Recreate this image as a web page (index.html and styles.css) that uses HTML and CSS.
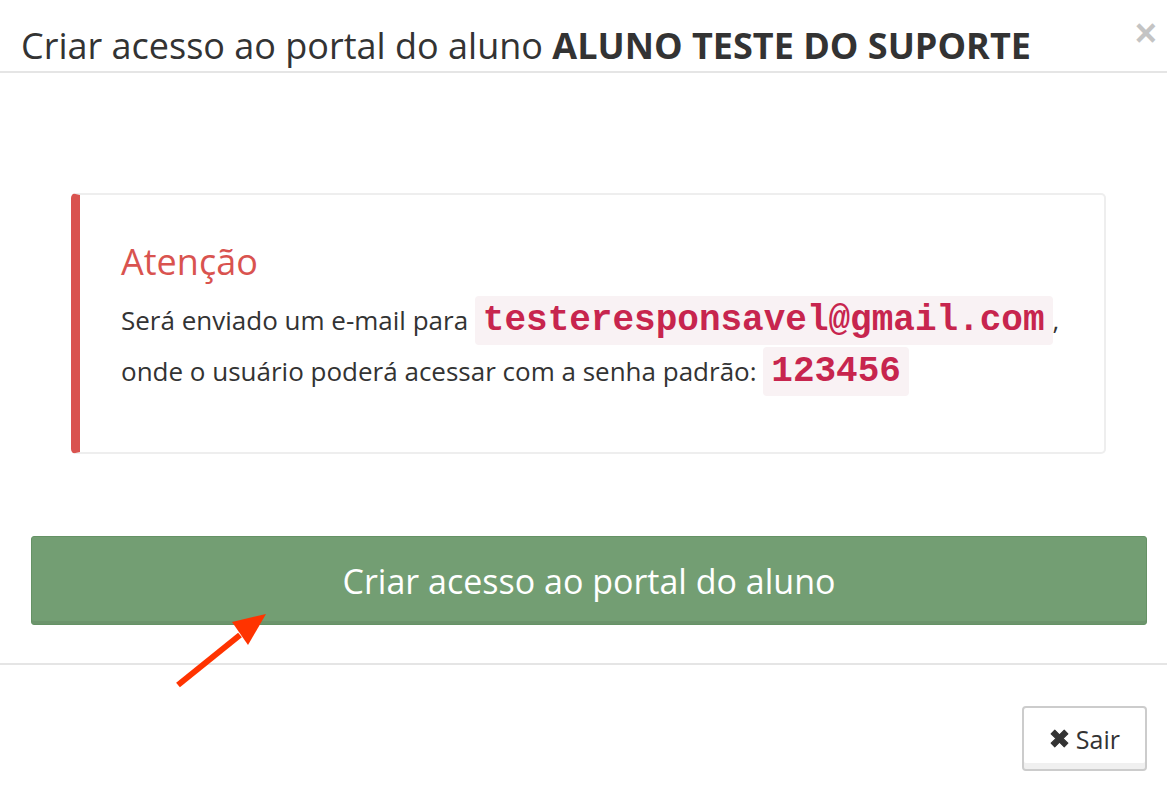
FILE: index.html
```html
<!DOCTYPE html>
<html lang="pt-BR">
<head>
    <meta charset="UTF-8">
    <title>Criar acesso ao portal do aluno</title>
    <link rel="stylesheet" href="styles.css">
</head>
<body>
    <div class="modal">
        <div class="modal-header">
            <h4 class="modal-title">Criar acesso ao portal do aluno <strong>ALUNO TESTE DO SUPORTE</strong></h4>
            <button type="button" class="close">&times;</button>
        </div>

        <div class="modal-body">
            <div class="alert">
                <h4 class="alert-title">Atenção</h4>
                <p>Será enviado um e-mail para <code>testeresponsavel@gmail.com</code>,</p>
                <p>onde o usuário poderá acessar com a senha padrão: <code>123456</code></p>
            </div>

            <button type="button" class="btn-success">Criar acesso ao portal do aluno</button>
        </div>

        <div class="modal-footer">
            <button type="button" class="btn-default">
                <svg class="icon" viewBox="0 0 16 16" width="21" height="21">
                    <path d="M1.6 4.4 4.4 1.6 8 5.2 11.6 1.6 14.4 4.4 10.8 8 14.4 11.6 11.6 14.4 8 10.8 4.4 14.4 1.6 11.6 5.2 8Z" fill="#333" stroke="#333" stroke-width="0.8" stroke-linejoin="round"/>
                </svg>
                Sair
            </button>
        </div>

        <!-- seta de destaque -->
        <svg class="arrow" viewBox="0 0 1167 786" width="1167" height="786">
            <line x1="178" y1="685" x2="240" y2="635" stroke="#ff3300" stroke-width="6"/>
            <polygon points="266,614 232,622 248,645" fill="#ff3300"/>
        </svg>
    </div>
</body>
</html>
```

FILE: styles.css
```css
body {
    margin: 0;
    font-family: "Open Sans", "Liberation Sans", sans-serif;
    color: #333;
    background-color: #fff;
}

.modal {
    position: relative;
    width: 1167px;
    height: 786px;
}

.modal-header {
    display: flex;
    align-items: flex-start;
    justify-content: space-between;
    height: 73px;
    padding: 0 10px 0 21px;
    box-sizing: border-box;
    border-bottom: 2px solid #e5e5e5;
}

.modal-title {
    margin: 21px 0 0;
    font-size: 36px;
    font-weight: normal;
    line-height: 50px;
}

.modal-title strong {
    font-weight: bold;
}

.close {
    margin-top: 14px;
    padding: 0;
    border: none;
    background: none;
    color: #c4c4c4;
    font-size: 38px;
    font-weight: bold;
    line-height: 1;
    cursor: pointer;
}

.modal-body {
    height: 592px;
    padding: 120px 20px 0 31px;
    box-sizing: border-box;
    border-bottom: 2px solid #e5e5e5;
}

.alert {
    margin: 0 41px 82px 40px;
    height: 261px;
    padding: 40px 30px 0 41px;
    box-sizing: border-box;
    border: 2px solid #eee;
    border-left: 9px solid #d9534f;
    border-radius: 5px;
}

.alert-title {
    margin: 0 0 6px;
    color: #d9534f;
    font-size: 36px;
    font-weight: normal;
    line-height: 54px;
}

.alert p {
    margin: 0;
    font-size: 26px;
    line-height: 51px;
}

code {
    padding: 4px 8px;
    border-radius: 4px;
    background-color: #f9f2f4;
    color: #c7254e;
    font-family: "Liberation Mono", "DejaVu Sans Mono", monospace;
    font-size: 36px;
    font-weight: bold;
}

.btn-success {
    display: block;
    width: 100%;
    height: 89px;
    border: 1px solid #659265;
    border-radius: 3px;
    background-color: #739e73;
    box-shadow: inset 0 -3px 0 rgba(0, 0, 0, 0.06);
    color: #fff;
    font-family: inherit;
    font-size: 34px;
    cursor: pointer;
}

.modal-footer {
    display: flex;
    justify-content: flex-end;
    padding: 41px 20px 0;
}

.btn-default {
    display: flex;
    align-items: center;
    gap: 6px;
    height: 65px;
    padding: 0 25px;
    border: 2px solid #ccc;
    border-radius: 4px;
    background-color: #fff;
    box-shadow: inset 0 -6px 0 #f0f0f0;
    color: #333;
    font-family: inherit;
    font-size: 25px;
    cursor: pointer;
}

.arrow {
    position: absolute;
    top: 0;
    left: 0;
    pointer-events: none;
}
```
